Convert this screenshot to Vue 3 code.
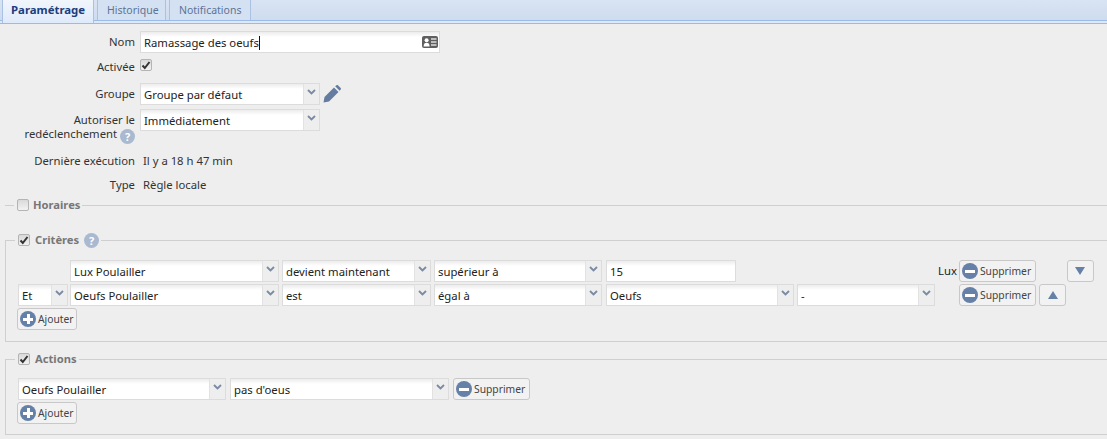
<script setup>
const rows = [
  { id: 1, sep: null, cells: [
    { t: 'Lux Poulailler', w: 209 }, { t: 'devient maintenant', w: 149 }, { t: 'supérieur à', w: 168 },
  ] },
  { id: 2, sep: 'Et', cells: [
    { t: 'Oeufs Poulailler', w: 209 }, { t: 'est', w: 149 }, { t: 'égal à', w: 168 },
  ] },
]
</script>

<template>
  <div class="page">
    <div class="tabbar">
      <div class="tab active">Paramétrage</div>
      <div class="tab">Historique</div>
      <div class="tab">Notifications</div>
    </div>
    <div class="strip"></div>

    <div class="form">
      <div class="frow r-nom">
        <label class="lbl">Nom</label>
        <div class="field nom">
          <span class="val">Ramassage des oeufs<i class="caret"></i></span>
          <svg class="card" width="16" height="12" viewBox="0 0 16 12"><rect width="16" height="12" rx="2" fill="#5f5f5f"/><circle cx="4.600" cy="4.200" r="2" fill="#fff"/><path d="M1.600 10.500c0-2.800 1.200-3.800 3-3.800s3 1 3 3.800z" fill="#fff"/><path d="M9 3h5.500M9 6h5.500M9 9h5.500" stroke="#ddd" stroke-width="1.300"/></svg>
        </div>
      </div>
      <div class="frow r-act">
        <label class="lbl act">Activée</label>
        <span class="cb on"><svg width="10" height="10" viewBox="0 0 10 10"><path d="M1.500 5.500l2.300 2.500 4.700-6" fill="none" stroke="#333" stroke-width="2"/></svg></span>
      </div>
      <div class="frow r-grp">
        <label class="lbl">Groupe</label>
        <div class="field sel" style="width: 180px"><span class="val">Groupe par défaut</span><span class="trg"><svg width="9" height="6" viewBox="0 0 9 6"><path d="M1 1l3.500 3.500L8 1" fill="none" stroke="#7a8aa3" stroke-width="1.800"/></svg></span></div>
        <svg class="pen" width="18" height="18" viewBox="0 0 18 18"><path d="M0.500 17.500l1-5.500L11 2.500l4.500 4.500L6 16.500zM12.200 1.300L13.500.2c.5-.3 1-.3 1.400 0l2.800 2.800c.4.400.3 1 0 1.400l-1.100 1.300z" fill="#647c9f"/></svg>
      </div>
      <div class="frow r-aut">
        <label class="lbl two">Autoriser le<br>redéclenchement <span class="help">?</span></label>
        <div class="field sel" style="width: 180px"><span class="val">Immédiatement</span><span class="trg"><svg width="9" height="6" viewBox="0 0 9 6"><path d="M1 1l3.500 3.500L8 1" fill="none" stroke="#7a8aa3" stroke-width="1.800"/></svg></span></div>
      </div>
      <div class="frow r-der">
        <label class="lbl">Dernière exécution</label>
        <span class="plain">Il y a 18 h 47 min</span>
      </div>
      <div class="frow r-typ">
        <label class="lbl">Type</label>
        <span class="plain">Règle locale</span>
      </div>
    </div>

    <fieldset class="fs collapsed">
      <legend><span class="cb"></span><b>Horaires</b></legend>
    </fieldset>

    <fieldset class="fs crit">
      <legend><span class="cb on"><svg width="10" height="10" viewBox="0 0 10 10"><path d="M1.500 5.500l2.300 2.500 4.700-6" fill="none" stroke="#333" stroke-width="2"/></svg></span><b>Critères</b><span class="help">?</span></legend>
      <div v-for="r in rows" :key="r.id" class="crow">
        <div v-if="r.sep" class="field sel et" style="width: 50px"><span class="val">{{ r.sep }}</span><span class="trg"><svg width="9" height="6" viewBox="0 0 9 6"><path d="M1 1l3.500 3.500L8 1" fill="none" stroke="#7a8aa3" stroke-width="1.800"/></svg></span></div>
        <div v-else class="seppad"></div>
        <div v-for="c in r.cells" :key="c.t" class="field sel" :style="{ width: c.w + 'px' }"><span class="val">{{ c.t }}</span><span class="trg"><svg width="9" height="6" viewBox="0 0 9 6"><path d="M1 1l3.500 3.500L8 1" fill="none" stroke="#7a8aa3" stroke-width="1.800"/></svg></span></div>
        <template v-if="r.id === 1">
          <div class="field inp w130"><span class="val">15</span></div>
          <span class="unit">Lux</span>
          <button class="btn"><span class="ic"><i class="minus"></i></span>Supprimer</button>
          <button class="btn arrow down"><i class="tri dn"></i></button>
        </template>
        <template v-else>
          <div class="field sel w188" style="width: 188px"><span class="val">Oeufs</span><span class="trg"><svg width="9" height="6" viewBox="0 0 9 6"><path d="M1 1l3.500 3.500L8 1" fill="none" stroke="#7a8aa3" stroke-width="1.800"/></svg></span></div>
          <div class="field sel w138"><span class="val">-</span><span class="trg"><svg width="9" height="6" viewBox="0 0 9 6"><path d="M1 1l3.500 3.500L8 1" fill="none" stroke="#7a8aa3" stroke-width="1.800"/></svg></span></div>
          <button class="btn push"><span class="ic"><i class="minus"></i></span>Supprimer</button>
          <button class="btn arrow"><i class="tri up"></i></button>
        </template>
      </div>
      <button class="btn add"><span class="ic"><i class="minus"></i><i class="minus vert"></i></span>Ajouter</button>
    </fieldset>

    <fieldset class="fs actions">
      <legend><span class="cb on"><svg width="10" height="10" viewBox="0 0 10 10"><path d="M1.500 5.500l2.300 2.500 4.700-6" fill="none" stroke="#333" stroke-width="2"/></svg></span><b>Actions</b></legend>
      <div class="crow">
        <div class="field sel" style="width: 208px"><span class="val">Oeufs Poulailler</span><span class="trg"><svg width="9" height="6" viewBox="0 0 9 6"><path d="M1 1l3.500 3.500L8 1" fill="none" stroke="#7a8aa3" stroke-width="1.800"/></svg></span></div>
        <div class="field sel" style="width: 219px; margin-left: 1px"><span class="val">pas d'oeus</span><span class="trg"><svg width="9" height="6" viewBox="0 0 9 6"><path d="M1 1l3.500 3.500L8 1" fill="none" stroke="#7a8aa3" stroke-width="1.800"/></svg></span></div>
        <button class="btn" style="margin-left: 1px"><span class="ic"><i class="minus"></i></span>Supprimer</button>
      </div>
      <button class="btn add"><span class="ic"><i class="minus"></i><i class="minus vert"></i></span>Ajouter</button>
    </fieldset>
  </div>
</template>

<style>
html, body { margin: 0; background: #eeeeee; overflow: hidden; }
</style>

<style scoped>
.page {
  width: 1107px;
  height: 439px;
  overflow: hidden;
  background: #eeeeee;
  font-family: "Noto Sans", "DejaVu Sans", sans-serif;
  font-size: 11.300px;
  color: #333;
  box-sizing: border-box;
}
.tabbar {
  height: 20px;
  display: flex;
  gap: 3px;
  padding-left: 2px;
  background: linear-gradient(#d8e4f3, #cfdcef);
  border-bottom: 1px solid #99bbe8;
}
.tab {
  height: 20px;
  padding: 0 9px;
  line-height: 20px;
  box-sizing: border-box;
  color: #5d7396;
  border-left: 1px solid #a9c2e4;
  border-right: 1px solid #a9c2e4;
  background: #d4e1f2;
  font-size: 10.500px;
}
.tab:nth-child(2) { width: 69px; }
.tab:nth-child(3) { width: 82px; }
.tab.active {
  width: 92px;
  height: 23px;
  padding: 0 8px;
  font-size: 11.400px;
  color: #1e3d7b;
  font-weight: 700;
  background: linear-gradient(#f1f6fc, #dfeafa);
  position: relative;
  z-index: 1;
}
.strip {
  height: 3px;
  box-sizing: border-box;
  background: #dfe8f6;
  border-bottom: 1px solid #99bbe8;
}
.form { padding-top: 7px; }
.frow { display: flex; align-items: flex-start; }
.lbl {
  width: 135px;
  flex: none;
  margin-right: 5px;
  text-align: right;
  line-height: 22px;
  color: #333;
}
.lbl.two { line-height: 14px; margin-top: 4px; }
.lbl.act { line-height: 16px; }
.r-nom { height: 28px; }
.r-act { height: 24px; }
.r-grp { height: 26px; }
.r-aut { height: 41px; }
.r-der { height: 24px; }
.r-typ { height: 23px; }
.plain { line-height: 22px; padding-left: 3px; }
.field {
  height: 22px;
  box-sizing: border-box;
  border: 1px solid #dcdcdc;
  background: linear-gradient(#ececec 0, #fff 5px);
  display: flex;
  align-items: center;
  color: #222;
  flex: none;
}
.val { flex: 1; padding-left: 3px; white-space: nowrap; overflow: hidden; }
.nom { width: 300px; }
.caret { display: inline-block; width: 1px; height: 14px; background: #111; vertical-align: -3px; }
.card { margin-right: 1px; }
.trg {
  width: 16px;
  height: 20px;
  flex: none;
  display: flex;
  justify-content: center;
  padding-top: 5px;
  box-sizing: border-box;
  background: #eeeeee;
  border-left: 1px solid #e2e2e2;
}
.pen { margin: 2px 0 0 3px; }
.cb {
  display: inline-flex;
  align-items: center;
  justify-content: center;
  width: 12px;
  height: 12px;
  border: 1px solid #b4b4b4;
  border-radius: 2px;
  box-sizing: border-box;
  background: linear-gradient(#d9d9d9, #f2f2f2);
  flex: none;
}
.help {
  display: inline-block;
  width: 15px;
  height: 15px;
  line-height: 15px;
  border-radius: 50%;
  background: #a9b9cf;
  color: #fff;
  font-weight: 700;
  font-size: 11px;
  text-align: center;
  vertical-align: -3px;
}
.fs {
  margin: 0 -10px 0 5px;
  padding: 0;
  border: 1px solid #cfcfcf;
  min-width: 0;
}
.fs legend {
  margin-left: 9px;
  padding: 0 2px 0 3px;
  display: flex;
  align-items: center;
  gap: 4px;
  height: 18px;
  color: #777;
  line-height: 18px;
  font-size: 11.200px;
}
.crit legend, .actions legend { margin-left: -3px; gap: 5px; }
.collapsed {
  border-width: 1px 0 0;
  height: 1px;
  margin-top: -1px;
  margin-bottom: 17px;
}
.crit { height: 111px; padding: 11px 0 0 12px; box-sizing: border-box; margin-bottom: 8px; }
.actions { height: 85px; padding: 10px 0 0 12px; box-sizing: border-box; }
.crow { display: flex; height: 24px; gap: 3px; }
.seppad { width: 49px; flex: none; }
.et { margin-right: -1px; }
.inp.w130 { width: 130px; margin-left: 1px; }
.w188 { margin-left: 1px; }
.w138 { width: 138px; }
.unit { margin-left: 199px; line-height: 22px; color: #222; margin-right: -1px; }
.btn {
  height: 22px;
  box-sizing: border-box;
  border: 1px solid #c8c8c8;
  border-radius: 3px;
  background: #f2f2f2;
  font: inherit;
  font-size: 10.300px;
  color: #444;
  padding: 0 2px;
  display: inline-flex;
  align-items: center;
  gap: 2px;
  flex: none;
  white-space: nowrap;
}
.crow .btn { width: 77px; }
.btn.push { margin-left: 21px; }
.crow .btn.arrow { width: 27px; justify-content: center; padding: 0; }
.crow .btn.down { margin-left: 28px; }
.add { margin-left: -1px; width: 60px; display: flex; }
.ic {
  position: relative;
  width: 16px;
  height: 16px;
  border-radius: 50%;
  background: #6681a8;
  flex: none;
}
.minus {
  position: absolute;
  left: 3px;
  top: 6.500px;
  width: 10px;
  height: 3px;
  background: #fff;
}
.minus.vert { left: 6.500px; top: 3px; width: 3px; height: 10px; }
.tri { width: 0; height: 0; border-left: 5px solid transparent; border-right: 5px solid transparent; }
.tri.dn { border-top: 8px solid #6681a8; }
.tri.up { border-bottom: 8px solid #6681a8; }
</style>
